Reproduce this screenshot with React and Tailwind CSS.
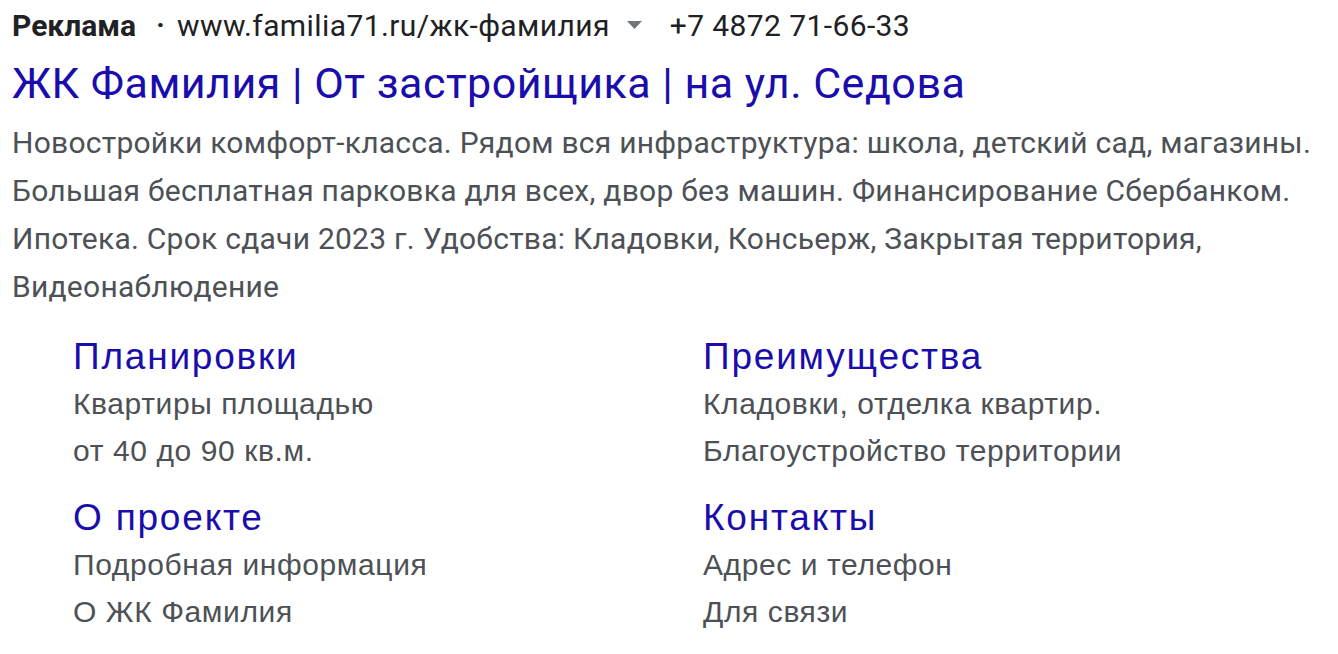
const sitelinks = [
  {
    title: 'Планировки',
    lines: ['Квартиры площадью', 'от 40 до 90 кв.м.'],
  },
  {
    title: 'Преимущества',
    lines: ['Кладовки, отделка квартир.', 'Благоустройство территории'],
  },
  {
    title: 'О проекте',
    lines: ['Подробная информация', 'О ЖК Фамилия'],
  },
  {
    title: 'Контакты',
    lines: ['Адрес и телефон', 'Для связи'],
  },
];

const App = () => {
  return (
    <div className="w-[1338px] h-[654px] bg-white px-3 overflow-hidden">
      {/* Ad header */}
      <div className="flex items-center h-[50px] text-[30px] tracking-[0.4px] text-[#202124] font-['Roboto',sans-serif] whitespace-nowrap">
        <span className="font-bold tracking-normal">Реклама</span>
        <span className="ml-[20px] mr-[12px] text-[28px] font-bold">·</span>
        <span>www.familia71.ru/жк-фамилия</span>
        <svg className="ml-[17px] mr-[28px]" width="15" height="8" viewBox="0 0 15 8">
          <path d="M0 0 L15 0 L7.5 8 Z" fill="#70757a" />
        </svg>
        <span>+7 4872 71-66-33</span>
      </div>

      {/* Title */}
      <div className="mt-[8px] h-[50px] leading-[50px] text-[43px] tracking-[0.5px] text-[#1a0dab] font-['Roboto',sans-serif] whitespace-nowrap">
        ЖК Фамилия | От застройщика | на ул. Седова
      </div>

      {/* Description */}
      <p className="mt-[11px] text-[30px] leading-[48px] tracking-[0.25px] text-[#4d5156] font-['Roboto',sans-serif] whitespace-nowrap">
        Новостройки комфорт-класса. Рядом вся инфраструктура: школа, детский сад, магазины.
        <br />
        Большая бесплатная парковка для всех, двор без машин. Финансирование Сбербанком.
        <br />
        Ипотека. Срок сдачи 2023 г. Удобства: Кладовки, Консьерж, Закрытая территория,
        <br />
        Видеонаблюдение
      </p>

      {/* Sitelinks */}
      <div className="mt-[23px] pl-[61px] grid grid-cols-[630px_630px] gap-y-[21px] font-['Liberation_Sans',Arial,sans-serif]">
        {sitelinks.map((link) => (
          <div key={link.title}>
            <div className="h-[46px] leading-[46px] text-[37px] tracking-[1.8px] text-[#1a0dab]">
              {link.title}
            </div>
            {link.lines.map((line) => (
              <div key={line} className="leading-[47px] text-[30px] tracking-[0.6px] text-[#4d5156]">
                {line}
              </div>
            ))}
          </div>
        ))}
      </div>
    </div>
  );
};

export default App;
